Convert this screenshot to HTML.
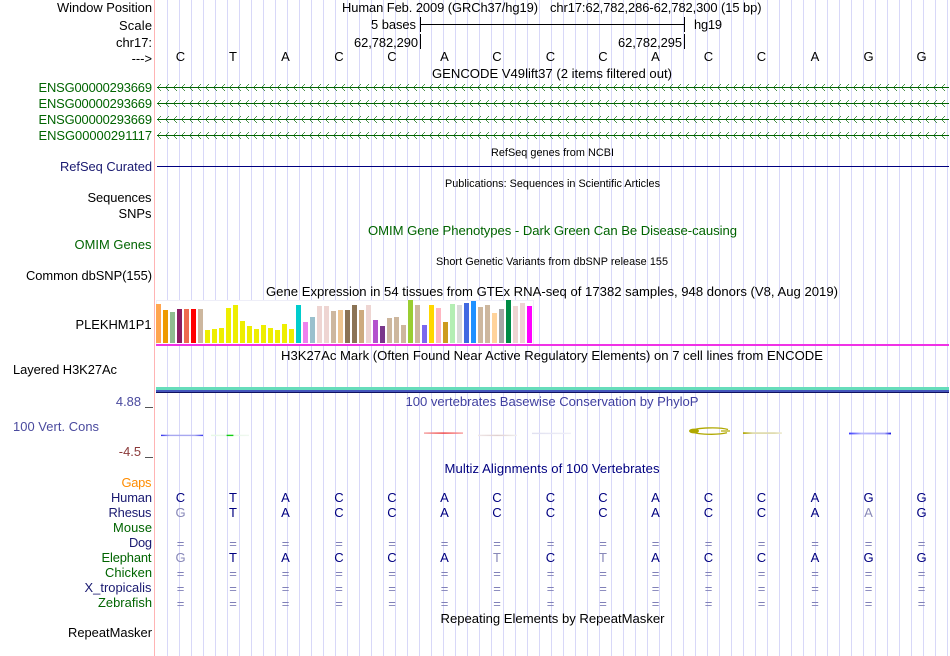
<!DOCTYPE html>
<html><head><meta charset="utf-8"><style>
html,body{margin:0;padding:0;background:#fff}
svg{display:block}
text{font-family:"Liberation Sans",sans-serif;font-size:12.9px;fill:#000}
.r{text-anchor:end}
.m{text-anchor:middle;font-size:13.1px}
.s{font-size:10.85px}
.g{fill:#006400}
.b{fill:#191970}
.base{text-anchor:middle;fill:#000080;font-size:13px}
.eq{text-anchor:middle;fill:#8080b8;font-size:13px}
.l{fill:#8888b8}
</style></head><body>
<svg width="950" height="656" viewBox="0 0 950 656" xmlns="http://www.w3.org/2000/svg">
<defs>
<pattern id="grid" x="167" y="0" width="12" height="656" patternUnits="userSpaceOnUse"><rect x="0" width="1" height="656" fill="#d8d8f8"/></pattern>
<pattern id="chev" x="157" y="0" width="8" height="7" patternUnits="userSpaceOnUse"><path d="M1 2h1v1h-1zM1 4h1v1h-1zM2 1h1v1h-1zM2 5h1v1h-1zM3 0h1v1h-1zM3 6h1v1h-1z" fill="#006400" fill-opacity=".7" shape-rendering="crispEdges"/></pattern>
<linearGradient id="fb"><stop offset="0" stop-color="#3030f0"/><stop offset=".2" stop-color="#a8a8f0"/><stop offset=".8" stop-color="#a8a8f0"/><stop offset="1" stop-color="#3838f0"/></linearGradient>
<linearGradient id="fg"><stop offset="0" stop-color="#e8f8e8"/><stop offset=".4" stop-color="#e8f8e8"/><stop offset=".42" stop-color="#10d010"/><stop offset=".58" stop-color="#10d010"/><stop offset=".6" stop-color="#e8f8e8"/><stop offset="1" stop-color="#f0f8f0"/></linearGradient>
<linearGradient id="fr"><stop offset="0" stop-color="#f4a0a0"/><stop offset=".5" stop-color="#f04040"/><stop offset="1" stop-color="#f8a0a0"/></linearGradient>
<linearGradient id="fo"><stop offset="0" stop-color="#b0a800"/><stop offset=".25" stop-color="#e0dcb0"/><stop offset=".8" stop-color="#e0dcb0"/><stop offset="1" stop-color="#f0eed8"/></linearGradient>
<linearGradient id="fl"><stop offset="0" stop-color="#f0e8e8"/><stop offset=".5" stop-color="#e0d0d0"/><stop offset="1" stop-color="#f0f0f0"/></linearGradient>
<linearGradient id="fv"><stop offset="0" stop-color="#e0e0f0"/><stop offset="1" stop-color="#f0f0f8"/></linearGradient>
<linearGradient id="fu"><stop offset="0" stop-color="#3838ff"/><stop offset=".3" stop-color="#b8b8fc"/><stop offset=".85" stop-color="#a8a8f8"/><stop offset="1" stop-color="#1010e0"/></linearGradient>
</defs>
<rect width="950" height="656" fill="#fff"/>
<rect x="167" y="0" width="783" height="656" fill="url(#grid)"/>
<rect x="154" y="0" width="1" height="656" fill="#ffb4b4"/>

<text class="r" x="152" y="12" textLength="95">Window Position</text>
<text class="r" x="152" y="30" textLength="33">Scale</text>
<text class="r" x="152" y="47" textLength="36">chr17:</text>
<text class="r" x="152" y="63">---&gt;</text>
<text x="342" y="12" textLength="196">Human Feb. 2009 (GRCh37/hg19)</text>
<text x="550" y="12" textLength="211.5">chr17:62,782,286-62,782,300 (15 bp)</text>
<text class="r" x="416" y="29" textLength="45">5 bases</text>
<rect x="420" y="17" width="1" height="15" fill="#000"/>
<rect x="420" y="24" width="265" height="1" fill="#000"/>
<rect x="684" y="17" width="1" height="15" fill="#000"/>
<text x="694" y="29" textLength="28">hg19</text>
<text class="r" x="418" y="47" textLength="64">62,782,290</text>
<rect x="420" y="34" width="1" height="15" fill="#000"/>
<text class="r" x="682" y="47" textLength="64">62,782,295</text>
<rect x="684" y="34" width="1" height="15" fill="#000"/>
<text class="m" style="font-size:13px" x="180.5 233 285.5 339 392 444.5 497 550.5 603 655.5 708.5 761.5 815 868.5 921.5" y="61">CTACCACCCACCAGG</text>
<text class="m" x="552" y="78" textLength="240">GENCODE V49lift37 (2 items filtered out)</text>

<text class="r g" x="152" y="92" textLength="113.5">ENSG00000293669</text>
<text class="r g" x="152" y="108" textLength="113.5">ENSG00000293669</text>
<text class="r g" x="152" y="124" textLength="113.5">ENSG00000293669</text>
<text class="r g" x="152" y="140" textLength="113.5">ENSG00000291117</text>
<g>
<rect x="157" y="87" width="792" height="1" fill="#006400"/>
<rect x="157" y="103" width="792" height="1" fill="#006400"/>
<rect x="157" y="119" width="792" height="1" fill="#006400"/>
<rect x="157" y="135" width="792" height="1" fill="#006400"/>
<rect x="157" y="84" width="792" height="7" fill="url(#chev)"/>
<g transform="translate(0,16)"><rect x="157" y="84" width="792" height="7" fill="url(#chev)"/></g>
<g transform="translate(0,32)"><rect x="157" y="84" width="792" height="7" fill="url(#chev)"/></g>
<g transform="translate(0,48)"><rect x="157" y="84" width="792" height="7" fill="url(#chev)"/></g>
</g>

<text class="m s" x="552.5" y="156" textLength="123">RefSeq genes from NCBI</text>
<text class="r b" x="152" y="171" textLength="92">RefSeq Curated</text>
<rect x="157" y="166" width="792" height="1" fill="#000080"/>
<text class="m s" x="552.5" y="187" textLength="215">Publications: Sequences in Scientific Articles</text>
<text class="r" x="151.5" y="202" textLength="64">Sequences</text>
<text class="r" x="151.5" y="218" textLength="33">SNPs</text>
<text class="m g" x="552.5" y="235" textLength="369">OMIM Gene Phenotypes - Dark Green Can Be Disease-causing</text>
<text class="r g" x="151.5" y="249" textLength="77">OMIM Genes</text>
<text class="m s" x="552" y="265" textLength="232">Short Genetic Variants from dbSNP release 155</text>
<text class="r" x="152" y="280" textLength="126">Common dbSNP(155)</text>
<text class="m" x="552" y="296" textLength="572">Gene Expression in 54 tissues from GTEx RNA-seq of 17382 samples, 948 donors (V8, Aug 2019)</text>
<text class="r" x="151.5" y="329" textLength="76">PLEKHM1P1</text>

<rect x="156.5" y="300.5" width="377" height="44" fill="#fff" stroke="#eeeef8"/>
<g>
<rect x="156" y="304" width="5" height="39" fill="#ffa54f"/>
<rect x="163" y="310" width="5" height="33" fill="#ee9a00"/>
<rect x="170" y="312" width="5" height="31" fill="#8fbc8f"/>
<rect x="177" y="309" width="5" height="34" fill="#8b1c62"/>
<rect x="184" y="309" width="5" height="34" fill="#ee6a50"/>
<rect x="191" y="309" width="5" height="34" fill="#ff0000"/>
<rect x="198" y="309" width="5" height="34" fill="#cdb79e"/>
<rect x="205" y="330" width="5" height="13" fill="#eeee00"/>
<rect x="212" y="329" width="5" height="14" fill="#eeee00"/>
<rect x="219" y="328" width="5" height="15" fill="#eeee00"/>
<rect x="226" y="308" width="5" height="35" fill="#eeee00"/>
<rect x="233" y="305" width="5" height="38" fill="#eeee00"/>
<rect x="240" y="321" width="5" height="22" fill="#eeee00"/>
<rect x="247" y="326" width="5" height="17" fill="#eeee00"/>
<rect x="254" y="329" width="5" height="14" fill="#eeee00"/>
<rect x="261" y="325" width="5" height="18" fill="#eeee00"/>
<rect x="268" y="328" width="5" height="15" fill="#eeee00"/>
<rect x="275" y="330" width="5" height="13" fill="#eeee00"/>
<rect x="282" y="324" width="5" height="19" fill="#eeee00"/>
<rect x="289" y="329" width="5" height="14" fill="#eeee00"/>
<rect x="296" y="305" width="5" height="38" fill="#00cdcd"/>
<rect x="303" y="322" width="5" height="21" fill="#ee82ee"/>
<rect x="310" y="317" width="5" height="26" fill="#9ac0cd"/>
<rect x="317" y="306" width="5" height="37" fill="#eed5d2"/>
<rect x="324" y="306" width="5" height="37" fill="#eed5d2"/>
<rect x="331" y="311" width="5" height="32" fill="#cdb79e"/>
<rect x="338" y="310" width="5" height="33" fill="#eec591"/>
<rect x="345" y="310" width="5" height="33" fill="#8b7355"/>
<rect x="352" y="305" width="5" height="38" fill="#8b7355"/>
<rect x="359" y="310" width="5" height="33" fill="#cdaa7d"/>
<rect x="366" y="305" width="5" height="38" fill="#eed5d2"/>
<rect x="373" y="320" width="5" height="23" fill="#b452cd"/>
<rect x="380" y="326" width="5" height="17" fill="#7a378b"/>
<rect x="387" y="318" width="5" height="25" fill="#cdb79e"/>
<rect x="394" y="317" width="5" height="26" fill="#cdb79e"/>
<rect x="401" y="325" width="5" height="18" fill="#cdb79e"/>
<rect x="408" y="300" width="5" height="43" fill="#9acd32"/>
<rect x="415" y="305" width="5" height="38" fill="#cdb79e"/>
<rect x="422" y="325" width="5" height="18" fill="#7b68ee"/>
<rect x="429" y="305" width="5" height="38" fill="#ffd700"/>
<rect x="436" y="308" width="5" height="35" fill="#ffb6c1"/>
<rect x="443" y="322" width="5" height="21" fill="#cd9b1d"/>
<rect x="450" y="304" width="5" height="39" fill="#b4eeb4"/>
<rect x="457" y="305" width="5" height="38" fill="#d9d9d9"/>
<rect x="464" y="303" width="5" height="40" fill="#4169e1"/>
<rect x="471" y="301" width="5" height="42" fill="#1e90ff"/>
<rect x="478" y="307" width="5" height="36" fill="#cdb79e"/>
<rect x="485" y="305" width="5" height="38" fill="#cdb79e"/>
<rect x="492" y="313" width="5" height="30" fill="#ffd39b"/>
<rect x="499" y="309" width="5" height="34" fill="#a6a6a6"/>
<rect x="506" y="300" width="5" height="43" fill="#008b45"/>
<rect x="513" y="306" width="5" height="37" fill="#eed5d2"/>
<rect x="520" y="303" width="5" height="40" fill="#eed5d2"/>
<rect x="527" y="306" width="5" height="37" fill="#ff00ff"/>
</g>
<rect x="156" y="344" width="793" height="2" fill="#f032e6"/>

<text class="m" x="552" y="360" textLength="542">H3K27Ac Mark (Often Found Near Active Regulatory Elements) on 7 cell lines from ENCODE</text>
<text x="13" y="374" textLength="104">Layered H3K27Ac</text>
<rect x="156" y="387" width="793" height="3" fill="#66ddbb"/>
<rect x="156" y="390" width="793" height="2" fill="#4455bb"/>
<rect x="156" y="392" width="793" height="1" fill="#101060"/>

<text class="r" x="141" y="406" style="fill:#4a4a9e">4.88</text>
<rect x="145" y="407" width="8" height="1" fill="#555"/>
<text class="m" x="552" y="406" style="fill:#4040a0" textLength="293">100 vertebrates Basewise Conservation by PhyloP</text>
<text x="13" y="431" style="fill:#4a4a9e" textLength="86">100 Vert. Cons</text>
<text class="r" x="141" y="456" style="fill:#8b3a3a">-4.5</text>
<rect x="145" y="457" width="8" height="1" fill="#555"/>
<rect x="161" y="434.7" width="42" height="1.4" fill="url(#fb)"/>
<rect x="211" y="434.7" width="38" height="1.4" fill="url(#fg)"/>
<rect x="424" y="432.4" width="39" height="1.4" fill="url(#fr)"/>
<rect x="478" y="434.7" width="39" height="1.4" fill="url(#fl)"/>
<rect x="532" y="432.7" width="39" height="1.4" fill="url(#fv)"/>
<path d="M691 431C696 427.3 720 427 728 429.5M691 431C696 435 718 435 727 432.8" fill="none" stroke="#b0a800" stroke-width="1.3"/>
<ellipse cx="694" cy="431" rx="5" ry="2.4" fill="#b0a800"/>
<rect x="721" y="430.4" width="9" height="1.2" fill="#b0a800"/>
<rect x="743" y="432.2" width="39" height="1.8" fill="url(#fo)"/>
<rect x="849" y="432.6" width="42" height="1.8" fill="url(#fu)"/>

<text class="m" x="552" y="473" style="fill:#000080" textLength="215">Multiz Alignments of 100 Vertebrates</text>
<text class="r" x="151.5" y="487" style="fill:#ff8c00" textLength="30">Gaps</text>
<text class="r b" x="152" y="502" textLength="41">Human</text>
<text class="r b" x="151.5" y="517" textLength="43">Rhesus</text>
<text class="r g" x="152" y="532" textLength="39">Mouse</text>
<text class="r b" x="152" y="547" textLength="23">Dog</text>
<text class="r g" x="151.5" y="562" textLength="50">Elephant</text>
<text class="r g" x="152" y="577" textLength="47">Chicken</text>
<text class="r b" x="151.5" y="592" textLength="67">X_tropicalis</text>
<text class="r g" x="152" y="607" textLength="54">Zebrafish</text>
<text class="r" x="152" y="637" textLength="84">RepeatMasker</text>

<text class="base" x="180.5 233 285.5 339 392 444.5 497 550.5 603 655.5 708.5 761.5 815 868.5 921.5" y="502">CTACCACCCACCAGG</text>
<text class="base" x="180.5 233 285.5 339 392 444.5 497 550.5 603 655.5 708.5 761.5 815 868.5 921.5" y="517"><tspan class="l">G</tspan>TACCACCCACCA<tspan class="l">A</tspan>G</text>
<text class="eq" x="180.5 233 285.5 339 392 444.5 497 550.5 603 655.5 708.5 761.5 815 868.5 921.5" y="548">===============</text>
<text class="base" x="180.5 233 285.5 339 392 444.5 497 550.5 603 655.5 708.5 761.5 815 868.5 921.5" y="562"><tspan class="l">G</tspan>TACCA<tspan class="l">T</tspan>C<tspan class="l">T</tspan>ACCAGG</text>
<text class="eq" x="180.5 233 285.5 339 392 444.5 497 550.5 603 655.5 708.5 761.5 815 868.5 921.5" y="578">===============</text>
<text class="eq" x="180.5 233 285.5 339 392 444.5 497 550.5 603 655.5 708.5 761.5 815 868.5 921.5" y="593">===============</text>
<text class="eq" x="180.5 233 285.5 339 392 444.5 497 550.5 603 655.5 708.5 761.5 815 868.5 921.5" y="608">===============</text>
<text class="m" x="552.5" y="623" textLength="224">Repeating Elements by RepeatMasker</text>
</svg>
</body></html>
